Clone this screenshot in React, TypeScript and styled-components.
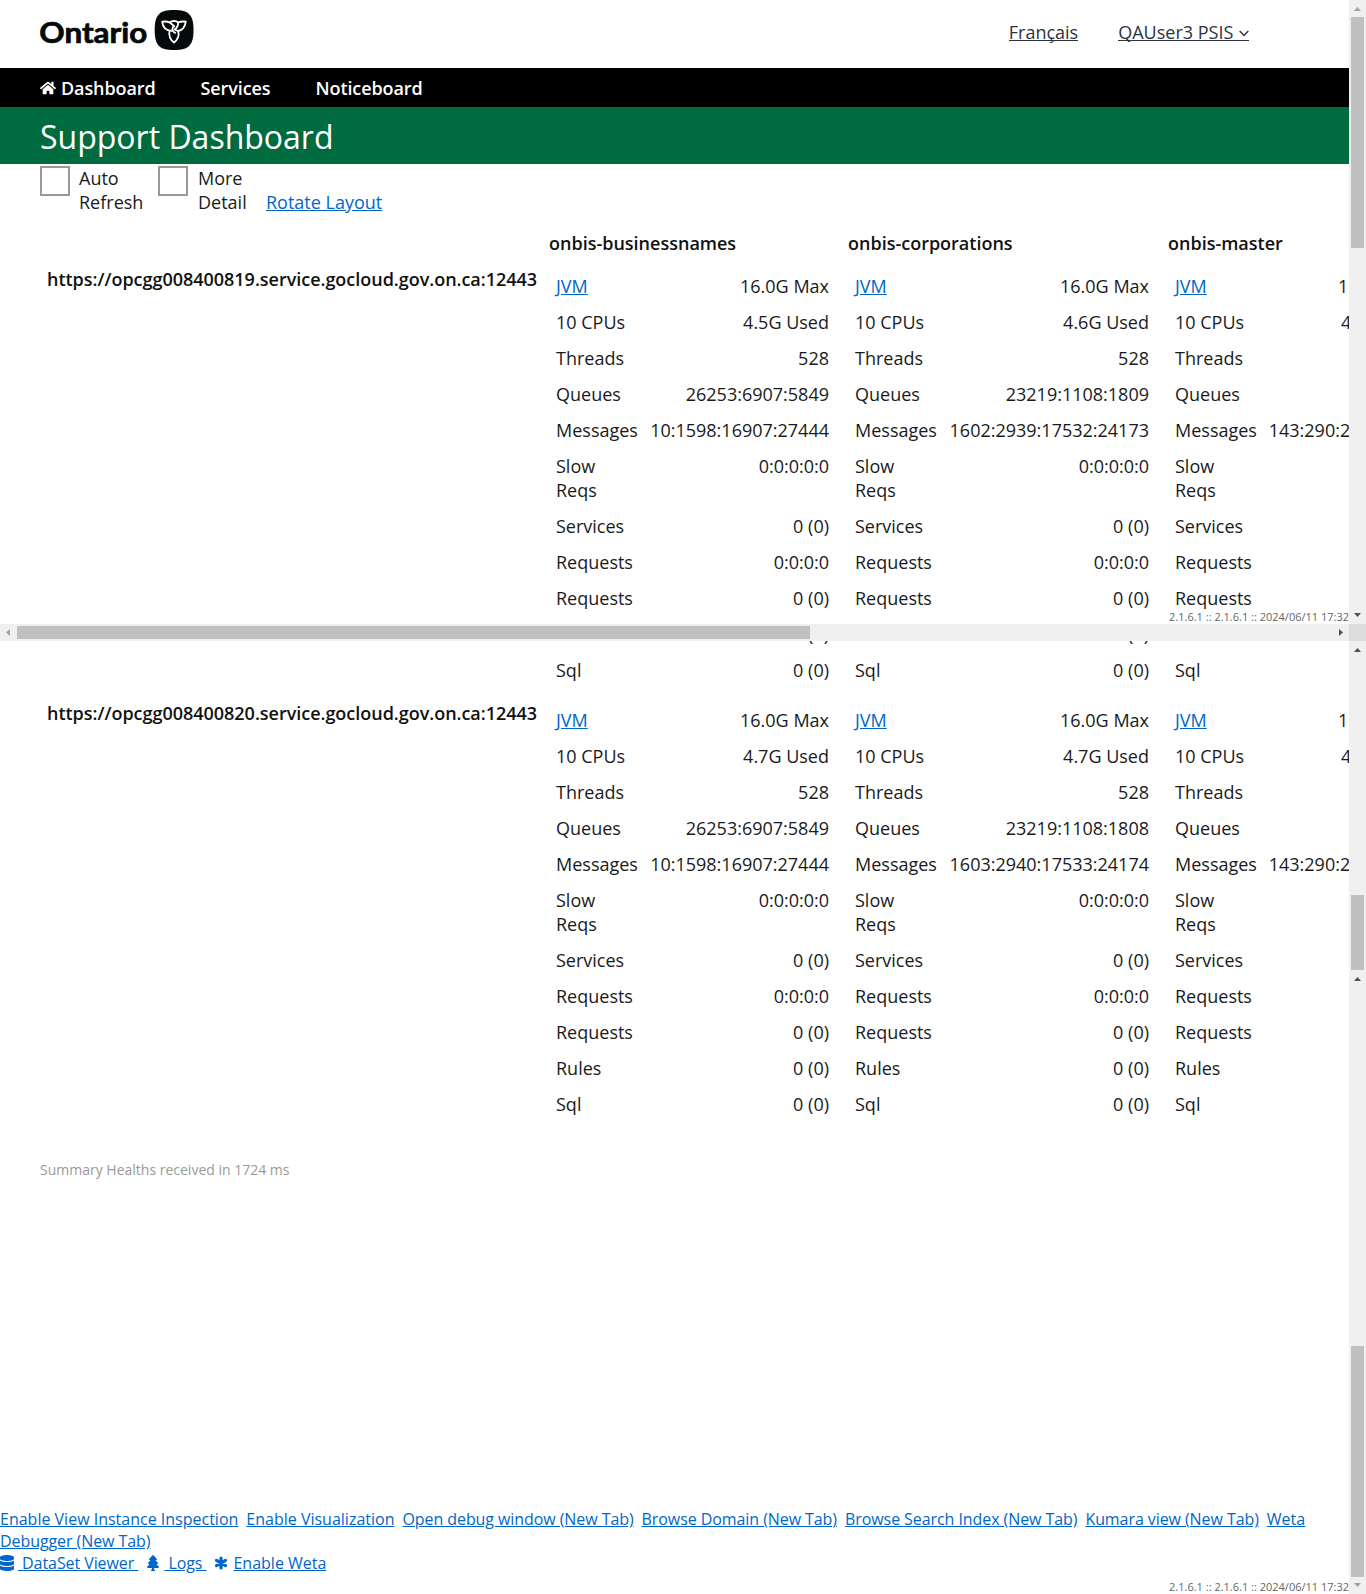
import React from "react";
import styled, { createGlobalStyle } from "styled-components";
import { FaHome, FaDatabase, FaTree } from "react-icons/fa";

const Global = createGlobalStyle`
  * { box-sizing: border-box; }
  html, body { margin: 0; padding: 0; background: #fff; }
  body {
    font-family: "Open Sans", "Noto Sans", sans-serif;
    font-size: 18px;
    line-height: 24px;
    color: #1a1a1a;
    overflow: hidden;
  }
`;

const Screen = styled.div`
  width: 1366px;
  height: 1594px;
  display: grid;
  grid-template: 624px 17px 953px / 1349px 17px;
  overflow: hidden;
`;

const Pane = styled.section`
  display: flex;
  flex-direction: column;
  overflow: hidden;
  min-width: 0;
  position: relative;
`;

const Header = styled.header`
  flex: none;
  height: 68px;
  padding: 0 100px 0 40px;
  display: flex;
  justify-content: space-between;
`;

const Logo = styled.svg`
  width: 156px;
  height: 60px;
  display: block;
`;

const UserLinks = styled.div`
  display: flex;
  gap: 40px;
  padding-top: 20px;
`;

const UserLink = styled.a`
  height: 21px;
  color: #2b3440;
  border-bottom: 1px solid #2b3440;
  white-space: nowrap;
`;

const Chevron = styled.svg`
  width: 10px;
  height: 7px;
  margin-left: 1px;
  vertical-align: 2px;
`;

const Nav = styled.nav`
  flex: none;
  height: 39px;
  padding: 8px 40px 0;
  background: #000;
  display: flex;
  gap: 45px;
`;

const NavItem = styled.a`
  display: flex;
  gap: 5px;
  color: #fff;
  font-weight: 600;
  letter-spacing: -0.1px;
  svg { width: 16px; height: 16px; margin-top: 4px; }
`;

const TitleBar = styled.div`
  flex: none;
  height: 57px;
  padding-left: 40px;
  background: #006b3f;
  color: #fff;
  font-size: 32px;
  line-height: 59px;
`;

const Controls = styled.div`
  flex: none;
  height: 67px;
  padding: 2px 0 0 40px;
  display: flex;
`;

const CheckLabel = styled.label<{ $width: number; $gap: number }>`
  width: ${(p) => p.$width}px;
  display: flex;
  gap: ${(p) => p.$gap}px;
`;

const CheckBox = styled.span`
  flex: none;
  width: 30px;
  height: 30px;
  border: 2px solid #999;
  background: #fff;
`;

const CheckText = styled.span`
  width: 60px;
`;

const Link = styled.a<{ $tight?: boolean }>`
  color: #0066cc;
  text-decoration: underline;
  letter-spacing: ${(p) => (p.$tight ? "-0.075px" : "normal")};
`;

const RotateLink = styled(Link)`
  margin-top: 24px;
`;

const columns = "549px 299px 320px 280px";

const HeadRow = styled.div`
  flex: none;
  display: grid;
  grid-template-columns: ${columns};
  height: 37px;
  font-weight: 600;
  color: #111;
`;

const ServerRow = styled.div<{ $height?: number }>`
  flex: none;
  display: grid;
  grid-template-columns: ${columns};
  ${(p) => (p.$height ? `height: ${p.$height}px; align-content: end; overflow: hidden;` : "")}
`;

const ServerName = styled.div`
  padding-left: 47px;
  margin-top: -1px;
  font-weight: 600;
  letter-spacing: -0.02px;
  color: #111;
  white-space: nowrap;
`;

const Stats = styled.div<{ $right: number }>`
  padding: 0 ${(p) => p.$right}px 0 7px;
`;

const Stat = styled.div`
  display: flex;
  justify-content: space-between;
  padding: 6px 0;
`;

const StatLabel = styled.span<{ $narrow: boolean }>`
  width: ${(p) => (p.$narrow ? "60px" : "auto")};
  white-space: ${(p) => (p.$narrow ? "normal" : "nowrap")};
`;

const StatValue = styled.span`
  white-space: nowrap;
`;

const Version = styled.div`
  position: absolute;
  right: 0;
  bottom: 0;
  font-size: 11px;
  line-height: 15px;
  color: #666;
  white-space: nowrap;
`;

const Summary = styled.p`
  margin: 0;
  padding: 36px 0 0 40px;
  font-size: 14px;
  color: #999;
`;

const Footer = styled.footer`
  margin-top: auto;
  height: 86px;
  font-size: 16px;
  line-height: 22px;
  color: #0066cc;
`;

const FooterLine = styled.div`
  display: flex;
  gap: 8px;
  white-space: pre;
`;

const IconLink = styled.span<{ $gap: number }>`
  display: flex;
  gap: ${(p) => p.$gap}px;
  svg { width: 14px; height: 16px; margin-top: 3px; }
`;

const RailV = styled.div`
  width: 17px;
  background: #f0f0f0;
  display: flex;
  flex-direction: column;
  align-items: center;
`;

const RailH = styled.div`
  height: 17px;
  background: #f0f0f0;
  display: flex;
  align-items: center;
`;

const Thumb = styled.div<{ $w: number; $h: number }>`
  flex: none;
  width: ${(p) => p.$w}px;
  height: ${(p) => p.$h}px;
  background: #c0c0c0;
`;

const Gap = styled.div<{ $size: number }>`
  flex: none;
  height: ${(p) => p.$size}px;
`;

const Spacer = styled.div`
  flex: 1;
`;

const Corner = styled.div`
  background: #dcdcdc;
`;

const ArrowBox = styled.svg`
  flex: none;
  display: block;
  width: 17px;
  height: 17px;
`;

const arrowPoints = {
  up: "5,11 12,11 8.5,7",
  down: "5,6 12,6 8.5,10",
  left: "10,5 10,12 6,8.5",
  right: "7,5 7,12 11,8.5",
};

function Arrow({ dir, dim }: { dir: keyof typeof arrowPoints; dim?: boolean }) {
  return (
    <ArrowBox viewBox="0 0 17 17">
      <polygon points={arrowPoints[dir]} fill={dim ? "#a3a3a3" : "#505050"} />
    </ArrowBox>
  );
}

type Instance = { used: string; queues: string; messages: string; partial?: boolean };

const labels = ["JVM", "10 CPUs", "Threads", "Queues", "Messages", "Slow Reqs", "Services", "Requests", "Requests", "Rules", "Sql"];

const insets = [19, 19, 21];

const first: Instance[] = [
  { used: "4.5G", queues: "26253:6907:5849", messages: "10:1598:16907:27444" },
  { used: "4.6G", queues: "23219:1108:1809", messages: "1602:2939:17532:24173" },
  { used: "4.6G", queues: "", messages: "143:290:2041:2958", partial: true },
];

const second: Instance[] = [
  { used: "4.7G", queues: "26253:6907:5849", messages: "10:1598:16907:27444" },
  { used: "4.7G", queues: "23219:1108:1808", messages: "1603:2940:17533:24174" },
  { used: "4.6G", queues: "", messages: "143:290:2041:2958", partial: true },
];

function valuesOf(d: Instance) {
  const head = ["16.0G Max", `${d.used} Used`];
  return d.partial
    ? [...head, "", "", d.messages]
    : [...head, "528", d.queues, d.messages, "0:0:0:0:0", "0 (0)", "0:0:0:0", "0 (0)", "0 (0)", "0 (0)"];
}

function Server({ name, data, from = 0, to = 11, height }: { name?: string; data: Instance[]; from?: number; to?: number; height?: number }) {
  return (
    <ServerRow $height={height}>
      <ServerName>{name}</ServerName>
      {data.map((d, i) => {
        const values = valuesOf(d);
        return (
          <Stats key={i} $right={insets[i]}>
            {labels.slice(from, to).map((label, r) => (
              <Stat key={r}>
                <StatLabel $narrow={label === "Slow Reqs"}>{label === "JVM" ? <Link>JVM</Link> : label}</StatLabel>
                <StatValue>{values[from + r]}</StatValue>
              </Stat>
            ))}
          </Stats>
        );
      })}
    </ServerRow>
  );
}

function Asterisk() {
  return (
    <svg viewBox="0 0 14 16">
      <path d="M7 3 V13 M2.500 5.400 L11.500 10.600 M11.500 5.400 L2.500 10.600" stroke="currentColor" strokeWidth="3.200" strokeLinecap="round" />
    </svg>
  );
}

function OntarioLogo() {
  return (
    <Logo viewBox="40 0 156 60">
      <text x="39.300" y="42.500" fontFamily="Lato, sans-serif" fontWeight="700" fontSize="29" textLength="108" lengthAdjust="spacingAndGlyphs" fill="#050a0a" stroke="#050a0a" strokeWidth="0.700">
        Ontario
      </text>
      <path d="M174 10 C189 10 193.500 15 193.500 30 C193.500 45 189 50 174 50 C159 50 154.700 45 154.700 30 C154.700 15 159 10 174 10Z" fill="#050a0a" />
      <g fill="none" stroke="#fff" strokeWidth="1.800" strokeLinejoin="round" strokeLinecap="round">
        <path d="M172 30.800 C166 31 162.800 27 162.200 21.700 C165 21.300 167.500 21.400 169.800 22.500 L174.300 26.300" />
        <path d="M169.800 22.500 C171 21.300 172.500 21 174 20.900 C175.500 21 177 21.400 178.200 22.500 C178.200 25 177.500 27.500 174.800 29.500" />
        <path d="M178.200 22.500 C180.500 21.400 183 21.300 185.800 21.700 C185 27 182.500 30.500 177.800 31 L174.800 29.500" />
        <path d="M169.500 31 C168.500 36 170.500 39.800 174 42.500 C177.500 39.800 179.300 36 178.300 31.200" />
        <path d="M173 27 C171.800 29.500 172.500 31.800 175.300 32.800" />
      </g>
    </Logo>
  );
}

export default function App() {
  return (
    <>
      <Global />
      <Screen>
        <Pane>
          <Header>
            <OntarioLogo />
            <UserLinks>
              <UserLink>Français</UserLink>
              <UserLink>
                QAUser3 PSIS{" "}
                <Chevron viewBox="0 0 10 7">
                  <path d="M0.700 1 L5 5.500 L9.300 1" fill="none" stroke="#2b3440" strokeWidth="1.400" />
                </Chevron>
              </UserLink>
            </UserLinks>
          </Header>
          <Nav>
            <NavItem><FaHome />Dashboard</NavItem>
            <NavItem>Services</NavItem>
            <NavItem>Noticeboard</NavItem>
          </Nav>
          <TitleBar>Support Dashboard</TitleBar>
          <Controls>
            <CheckLabel $width={118} $gap={9}><CheckBox /><CheckText>Auto Refresh</CheckText></CheckLabel>
            <CheckLabel $width={108} $gap={10}><CheckBox /><CheckText>More Detail</CheckText></CheckLabel>
            <RotateLink>Rotate Layout</RotateLink>
          </Controls>
          <HeadRow>
            <span />
            <span>onbis-businessnames</span>
            <span>onbis-corporations</span>
            <span>onbis-master</span>
          </HeadRow>
          <Server name="https://opcgg008400819.service.gocloud.gov.on.ca:12443" data={first} to={9} />
          <Version>2.1.6.1 :: 2.1.6.1 :: 2024/06/11 17:32</Version>
        </Pane>
        <RailV>
          <Arrow dir="up" dim />
          <Thumb $w={13} $h={231} />
          <Spacer />
          <Arrow dir="down" />
        </RailV>

        <RailH>
          <Arrow dir="left" dim />
          <Thumb $w={793} $h={13} />
          <Spacer />
          <Arrow dir="right" />
        </RailH>
        <Corner />

        <Pane>
          <Server data={first} from={9} height={47} />
          <Gap $size={14} />
          <Server name="https://opcgg008400820.service.gocloud.gov.on.ca:12443" data={second} />
          <Summary>Summary Healths received in 1724 ms</Summary>
          <Footer>
            <FooterLine>
              <Link>Enable View Instance Inspection</Link>
              <Link>Enable Visualization</Link>
              <Link $tight>Open debug window (New Tab)</Link>
              <Link $tight>Browse Domain (New Tab)</Link>
              <Link $tight>Browse Search Index (New Tab)</Link>
              <Link $tight>Kumara view (New Tab)</Link>
              <Link>Weta</Link>
            </FooterLine>
            <FooterLine>
              <Link $tight>Debugger (New Tab)</Link>
            </FooterLine>
            <FooterLine>
              <IconLink $gap={4}><FaDatabase /><Link $tight>{" DataSet Viewer "}</Link></IconLink>
              <IconLink $gap={4}><FaTree /><Link $tight>{" Logs "}</Link></IconLink>
              <IconLink $gap={5}><Asterisk /><Link>Enable Weta</Link></IconLink>
            </FooterLine>
          </Footer>
          <Version>2.1.6.1 :: 2.1.6.1 :: 2024/06/11 17:32</Version>
        </Pane>
        <RailV>
          <Arrow dir="up" />
          <Gap $size={237} />
          <Thumb $w={13} $h={75} />
          <Arrow dir="up" />
          <Spacer />
          <Thumb $w={13} $h={231} />
          <Arrow dir="down" dim />
        </RailV>
      </Screen>
    </>
  );
}
